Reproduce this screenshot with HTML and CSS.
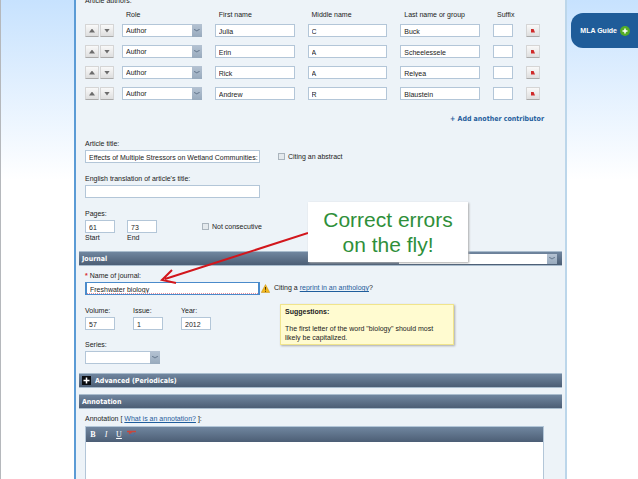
FILE: index.html
```html
<!DOCTYPE html>
<html lang="en">
  <head>
    <meta charset="UTF-8" />
    <meta name="viewport" content="width=device-width, initial-scale=1" />
    <title>Citation Form</title>
    <link rel="stylesheet" href="styles.css">
  </head>
  <body>
    <form class="panel">
      <section class="authors">
        <h2>Article authors:</h2>
        <div class="author head">
          <span class="arrows"></span>
          <div class="fields">
            <span>Role</span>
            <span>First name</span>
            <span>Middle name</span>
            <span>Last name or group</span>
            <span>Suffix</span>
          </div>
        </div>

        <div class="author">
          <span class="arrows">
            <button type="button" class="up" aria-label="Move up"></button>
            <button type="button" class="down" aria-label="Move down"></button>
          </span>
          <div class="fields">
            <span class="select"><select aria-label="Role"><option>Author</option></select></span>
            <input type="text" aria-label="First name" value="Julia" />
            <input type="text" aria-label="Middle name" value="C" />
            <input type="text" aria-label="Last name or group" value="Buck" />
            <input type="text" aria-label="Suffix" />
            <button type="button" class="remove" aria-label="Remove"></button>
          </div>
        </div>

        <div class="author">
          <span class="arrows">
            <button type="button" class="up" aria-label="Move up"></button>
            <button type="button" class="down" aria-label="Move down"></button>
          </span>
          <div class="fields">
            <span class="select"><select aria-label="Role"><option>Author</option></select></span>
            <input type="text" aria-label="First name" value="Erin" />
            <input type="text" aria-label="Middle name" value="A" />
            <input type="text" aria-label="Last name or group" value="Scheelessele" />
            <input type="text" aria-label="Suffix" />
            <button type="button" class="remove" aria-label="Remove"></button>
          </div>
        </div>

        <div class="author">
          <span class="arrows">
            <button type="button" class="up" aria-label="Move up"></button>
            <button type="button" class="down" aria-label="Move down"></button>
          </span>
          <div class="fields">
            <span class="select"><select aria-label="Role"><option>Author</option></select></span>
            <input type="text" aria-label="First name" value="Rick" />
            <input type="text" aria-label="Middle name" value="A" />
            <input type="text" aria-label="Last name or group" value="Relyea" />
            <input type="text" aria-label="Suffix" />
            <button type="button" class="remove" aria-label="Remove"></button>
          </div>
        </div>

        <div class="author">
          <span class="arrows">
            <button type="button" class="up" aria-label="Move up"></button>
            <button type="button" class="down" aria-label="Move down"></button>
          </span>
          <div class="fields">
            <span class="select"><select aria-label="Role"><option>Author</option></select></span>
            <input type="text" aria-label="First name" value="Andrew" />
            <input type="text" aria-label="Middle name" value="R" />
            <input type="text" aria-label="Last name or group" value="Blaustein" />
            <input type="text" aria-label="Suffix" />
            <button type="button" class="remove" aria-label="Remove"></button>
          </div>
        </div>

        <a class="add" href="#">+ Add another contributor</a>
      </section>

      <section class="article">
        <div class="group">
          <label for="title">Article title:</label>
          <div class="line">
            <input type="text" class="long" id="title" value="Effects of Multiple Stressors on Wetland Communities: F" />
            <label class="check"><input type="checkbox" /> Citing an abstract</label>
          </div>
        </div>
        <div class="group">
          <label for="english">English translation of article's title:</label>
          <input type="text" class="long" id="english" />
        </div>
        <div class="group pages">
          <h3>Pages:</h3>
          <div class="line">
            <input type="text" class="short" id="start" value="61" />
            <input type="text" class="short" id="end" value="73" />
            <label class="check"><input type="checkbox" /> Not consecutive</label>
          </div>
          <div class="line">
            <label class="short" for="start">Start</label>
            <label class="short" for="end">End</label>
          </div>
        </div>
      </section>

      <div class="bar">
        <h2>Journal</h2>
        <span class="select"><select aria-label="Source type"><option></option></select></span>
      </div>

      <section class="journal">
        <div class="details">
          <div class="group">
            <label for="journal"><b class="required">*</b> Name of journal:</label>
            <div class="current">
              <input type="text" class="long" id="journal" value="Freshwater biology" spellcheck="false" />
              <svg class="warning" viewBox="0 0 18 18" aria-hidden="true">
                <path d="M9 1 L17.5 17 H.5 Z" fill="#f2b71c" stroke="#c98e10" stroke-linejoin="round" />
                <path d="M9 6 V11.500 M9 13.500 V15.500" stroke="#4a3205" stroke-width="2" />
              </svg>
            </div>
          </div>
          <div class="numbers">
            <div><label for="volume">Volume:</label><input type="text" class="short" id="volume" value="57" /></div>
            <div><label for="issue">Issue:</label><input type="text" class="short" id="issue" value="1" /></div>
            <div><label for="year">Year:</label><input type="text" class="short" id="year" value="2012" /></div>
          </div>
          <div class="group series">
            <label for="series">Series:</label>
            <span class="select"><select id="series"><option></option></select></span>
          </div>
        </div>
        <div class="side">
          <p class="citing">Citing a <a href="#">reprint in an anthology</a>?</p>
          <div class="suggestions">
            <h3>Suggestions:</h3>
            <p>The first letter of the word "biology" should most likely be capitalized.</p>
          </div>
        </div>
      </section>

      <div class="bar">
        <svg class="plus" viewBox="0 0 9 9" aria-hidden="true">
          <rect width="9" height="9" fill="#0b0d10" />
          <path d="M4.500 1.500 V7.500 M1.500 4.500 H7.500" stroke="#fff" stroke-width="1.500" />
        </svg>
        <h2>Advanced (Periodicals)</h2>
      </div>
      <div class="bar">
        <h2>Annotation</h2>
      </div>

      <section class="annotation">
        <p><label for="note">Annotation</label> [ <a href="#">What is an annotation?</a> ]:</p>
        <div class="editor">
          <div class="toolbar">
            <button type="button"><b>B</b></button>
            <button type="button"><i>I</i></button>
            <button type="button"><u>U</u></button>
            <button type="button" aria-label="Check spelling">
              <svg viewBox="0 0 10 7" aria-hidden="true">
                <path d="M0 1.500 H9 M2 3.500 L4.500 2" stroke="#c9463c" stroke-width="1.500" fill="none" />
                <path d="M3 4.500 L5 6 L8 3" stroke="#4470a8" fill="none" />
              </svg>
            </button>
          </div>
          <textarea id="note"></textarea>
        </div>
      </section>

      <div class="callout">
        Correct errors<br />on the fly!
        <svg viewBox="0 0 150 54" aria-hidden="true">
          <path d="M150 2 L7 48 M14 39 L4 49 L18 52" fill="none" stroke="#d2161c" stroke-width="2" />
        </svg>
      </div>
    </form>

    <a class="guide" href="#">
      MLA Guide
      <svg viewBox="0 0 10 10" aria-hidden="true">
        <circle cx="5" cy="5" r="5" fill="#55ad25" />
        <path d="M5 2.500 V7.500 M2.500 5 H7.500" stroke="#fff" stroke-width="1.500" />
      </svg>
    </a>
  </body>
</html>
```
FILE: styles.css
```css
:root {
  --clr-panel: #edf3f8;
  --clr-border: #b3c6d8;
  --clr-text: #222;
  --clr-link: #1f5d9c;
  --bar: linear-gradient(#70869f, #4c5e75);
  --font-family: "Liberation Sans", Arial, sans-serif;
  --font-bold: "DejaVu Sans Condensed", "DejaVu Sans", sans-serif;
}

* {
  box-sizing: border-box;
}

body {
  margin: 0;
  min-height: 100vh;
  display: flex;
  padding: 0 71px 0 73px;
  background: linear-gradient(#c7e2fe, #fff 180px);
  border-left: 1px solid #b5b8bc;
  color: var(--clr-text);
  font: 7px/10px var(--font-family);
  overflow: hidden;
}

h2,
h3,
p {
  margin: 0;
  font-size: inherit;
  font-weight: normal;
}

a {
  color: var(--clr-link);
}

input,
select,
button,
textarea {
  margin: 0;
  font: inherit;
  color: inherit;
}

input[type="text"],
select {
  display: block;
  width: 100%;
  min-width: 0;
  height: 13px;
  padding: 1px 0 0 3px;
  border: 1px solid var(--clr-border);
  border-radius: 0;
  background: #fff;
  appearance: none;
}

.panel {
  position: relative;
  flex: 1;
  display: flex;
  flex-direction: column;
  margin-top: -4px;
  padding: 0 3px;
  background: var(--clr-panel);
  border-left: 2px solid #5b9bd5;
  border-right: 2px solid #bcd6ea;
}

section {
  padding: 0 18px 0 6px;
}

.authors {
  display: flex;
  flex-direction: column;
  gap: 8px;
  padding-right: 23px;
}

.author {
  display: flex;
  gap: 8px;
}

.author.head {
  margin-top: -4px;
  margin-bottom: -4px;
}

.head .fields span {
  padding-left: 4px;
  white-space: nowrap;
}

.arrows {
  display: flex;
  gap: 1px;
  width: 29px;
}

.fields {
  flex: 1;
  display: grid;
  grid-template-columns: repeat(4, 1fr) 20px 13px;
  gap: 13px;
}

.arrows button,
.remove {
  display: grid;
  place-items: center;
  width: 14px;
  height: 13px;
  padding: 0;
  border: 1px solid #d5d5d5;
  border-bottom-color: #aaa;
  border-radius: 1px;
  background: linear-gradient(#f9f9f9, #dedede);
}

.up::before,
.down::before,
.remove::before {
  content: "";
  width: 6px;
  height: 4px;
  background: #6c6c6c;
  clip-path: polygon(50% 0, 100% 100%, 0 100%);
}

.down::before {
  clip-path: polygon(0 0, 100% 0, 50% 100%);
}

.remove::before {
  width: 4px;
  background: #cf2a2a;
  clip-path: polygon(0 0, 60% 0, 100% 100%, 0 100%);
}

.select {
  display: block;
  position: relative;
}

/* Drop-down arrow */
.select::before {
  content: "";
  position: absolute;
  top: 0;
  right: 0;
  bottom: 0;
  width: 10px;
  background: linear-gradient(#b5c3d3, #98aabd);
  pointer-events: none;
}

.select::after {
  content: "";
  position: absolute;
  top: calc(50% - 2px);
  right: 2px;
  width: 6px;
  height: 3px;
  background: #718398;
  clip-path: polygon(0 0, 50% 60%, 100% 0, 100% 40%, 50% 100%, 0 40%);
  pointer-events: none;
}

.add {
  align-self: flex-end;
  margin: 6px -5px 0 0;
  font-family: var(--font-bold);
  font-weight: bold;
  text-decoration: none;
}

.article {
  display: flex;
  flex-direction: column;
  gap: 11px;
  margin-top: 15px;
  margin-bottom: 8px;
}

.group > label,
.group > h3,
.numbers label {
  display: block;
  margin-bottom: 1px;
}

.line {
  display: flex;
  align-items: center;
}

input.long {
  width: 175px;
}

.short,
input.short {
  width: 30px;
  margin-right: 12px;
}

.check {
  display: flex;
  align-items: center;
  gap: 3px;
  margin-left: 18px;
}

.pages .check {
  margin-left: 33px;
}

.check input {
  width: 7px;
  height: 7px;
  border: 1px solid #aab4bd;
  background: #e4e9ed;
  appearance: none;
}

.bar {
  display: flex;
  align-items: center;
  gap: 4px;
  min-height: 15px;
  padding: 0 5px 0 3px;
  background: var(--bar);
  border: solid #a9bccd;
  border-width: 1px 0;
  color: #fff;
}

.bar h2 {
  font-family: var(--font-bold);
  font-weight: bold;
}

.bar .select {
  width: 158px;
  margin-left: auto;
}

.bar select {
  height: 10px;
  border: 0;
}

.plus {
  width: 9px;
  height: 9px;
}

.journal {
  display: flex;
  gap: 14px;
  padding-top: 5px;
  padding-bottom: 9px;
}

.required {
  color: #d93030;
}

.current {
  display: flex;
  align-items: center;
  gap: 1px;
  margin-right: -10px;
}

#journal {
  border: 1px solid #4a8bcb;
  border-width: 1px 2px;
  background: repeating-linear-gradient(90deg, #e58a9a 0 1px, #fff 1px 2px) bottom / 100% 1px no-repeat #fff;
}

.warning {
  width: 9px;
  height: 9px;
}

.details {
  width: 175px;
}

.numbers {
  display: flex;
  gap: 6px;
  margin: 11px 0 10px;
}

.series .select {
  width: 75px;
}

.side {
  flex: 1;
}

.citing {
  margin: 12px 0 11px;
}

.suggestions {
  width: 174px;
  margin-left: 6px;
  padding: 2px 4px;
  border: 1px solid #f0e48c;
  background: #fffbd0;
  box-shadow: 1px 1px 2px #aaa;
  line-height: 9px;
}

.suggestions h3 {
  margin-bottom: 8px;
  font-weight: bold;
}

.bar + .bar {
  margin-top: 6px;
}

.annotation {
  flex: 1;
  display: flex;
  flex-direction: column;
  padding-top: 5px;
}

.editor {
  flex: 1;
  display: flex;
  flex-direction: column;
  margin-top: 2px;
  border: 1px solid var(--clr-border);
  border-bottom: 0;
}

.toolbar {
  display: flex;
  gap: 3px;
  padding: 2px;
  background: var(--bar);
}

.toolbar button {
  width: 10px;
  height: 11px;
  padding: 0;
  border: 0;
  background: none;
  color: #fff;
  font: 8px/11px "Liberation Serif", serif;
}

textarea {
  flex: 1;
  border: 0;
  background: #fff;
  resize: none;
}

.callout {
  position: absolute;
  top: 206px;
  left: 232px;
  width: 160px;
  padding: 5px 0;
  background: #fff;
  box-shadow: 1px 1px 2px #aaa;
  color: #2f8f3a;
  font: 21px/25px var(--font-family);
  text-align: center;
}

/* Pointer to the journal name */
.callout svg {
  position: absolute;
  top: 29px;
  right: 100%;
  width: 150px;
  height: 54px;
}

.guide {
  position: absolute;
  top: 13px;
  right: 0;
  display: flex;
  align-items: center;
  gap: 3px;
  height: 35px;
  padding: 0 8px 0 9px;
  border-radius: 12px 0 0 12px;
  background: #1f5c99;
  color: #fff;
  font-weight: bold;
  text-decoration: none;
}

.guide svg {
  width: 10px;
  height: 10px;
}
```
